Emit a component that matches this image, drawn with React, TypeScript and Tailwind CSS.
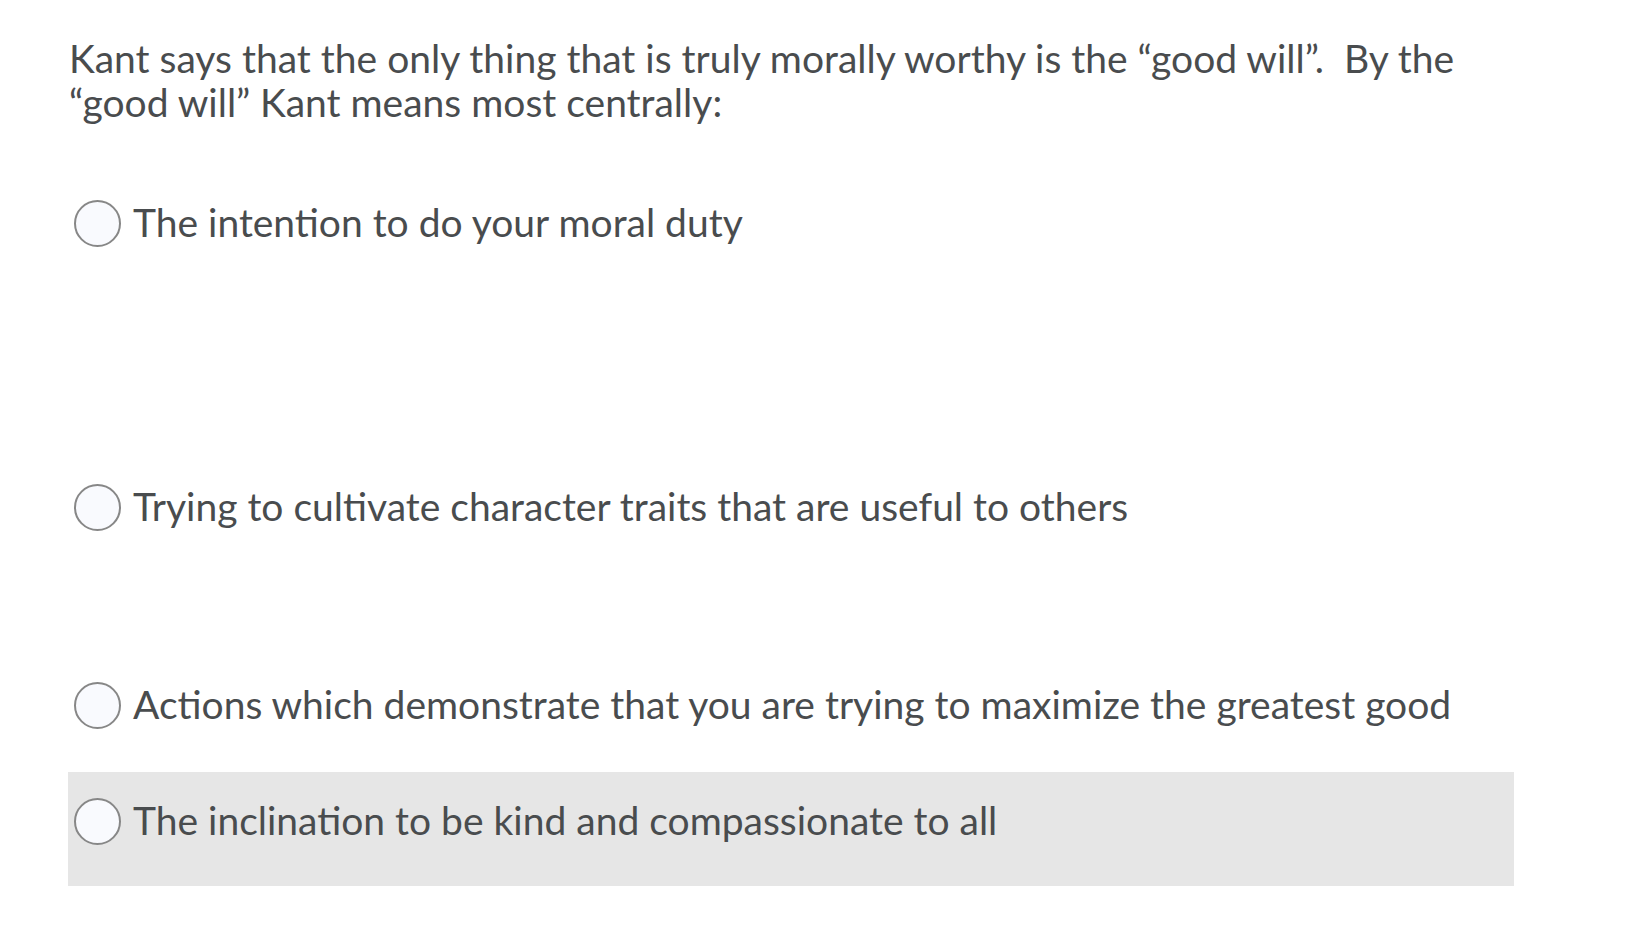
import React from "react";

const options = [
  { text: "The intention to do your moral duty", h: "h-[284px]", bg: "" },
  { text: "Trying to cultivate character traits that are useful to others", h: "h-[198px]", bg: "" },
  { text: "Actions which demonstrate that you are trying to maximize the greatest good", h: "h-[116px]", bg: "" },
  { text: "The inclination to be kind and compassionate to all", h: "h-[114px]", bg: "bg-[#e6e6e6]" },
];

export default function App() {
  return (
    <div className="min-h-[928px] w-[1642px] bg-white text-[#494c4e]" style={{ fontFamily: "Lato, 'Open Sans', sans-serif" }}>
      <div className="ml-[68px] w-[1446px] pt-[36px]">
        <p className="text-[39px] leading-[44px] pl-[1px]">
          Kant says that the only thing that is truly morally worthy is the “good will”.&nbsp; By the “good will” Kant means most centrally:
        </p>
        <div className="mt-[50px]">
          {options.map((o, i) => (
            <div key={i} className={`${o.h} ${o.bg} flex items-start pt-[26px]`}>
              <span className="ml-[6px] w-[47px] h-[47px] rounded-full border-2 border-[#878787] bg-[#f9fafe] shrink-0" />
              <span className="ml-[12px] text-[39px] leading-[45px] whitespace-nowrap">{o.text}</span>
            </div>
          ))}
        </div>
      </div>
    </div>
  );
}
